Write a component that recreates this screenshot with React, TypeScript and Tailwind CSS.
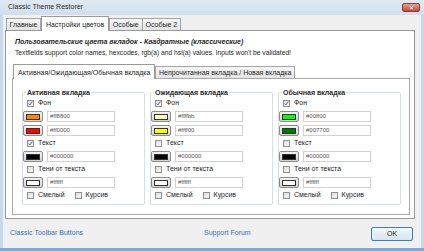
import React from 'react';

interface SwatchProps {
    color: string,
    value: string
}

interface GroupProps {
    title: string,
    bgChecked: boolean,
    textChecked: boolean,
    swatches: SwatchProps[]
}

const groups: GroupProps[] = [
    {
        title: "Активная вкладка",
        bgChecked: true,
        textChecked: true,
        swatches: [
            { color: "bg-[#ff8800]", value: "#ff8800" },
            { color: "bg-[#ff0000]", value: "#ff0000" },
        ]
    },
    {
        title: "Ожидающая вкладка",
        bgChecked: true,
        textChecked: false,
        swatches: [
            { color: "bg-[#ffffbb]", value: "#ffffbb" },
            { color: "bg-[#ffff00]", value: "#ffff00" },
        ]
    },
    {
        title: "Обычная вкладка",
        bgChecked: true,
        textChecked: false,
        swatches: [
            { color: "bg-[#00ff00]", value: "#00ff00" },
            { color: "bg-[#007700]", value: "#007700" },
        ]
    },
];

const Check = ({ checked, label }: { checked?: boolean, label: string }) => (
    <div className="flex items-center gap-[4px] h-[9px]">
        <span className="w-[7px] h-[7px] border border-[#8f8f8f] bg-linear-to-br from-[#dedede] to-[#fbfbfb] flex items-center justify-center shrink-0">
            {checked && (
                <svg width="5" height="5" viewBox="0 0 5 5">
                    <path d="M0.6 2.6 L1.9 3.9 L4.4 0.7" stroke="#4c5f8e" strokeWidth="1" fill="none" />
                </svg>
            )}
        </span>
        <span>{label}</span>
    </div>
);

const Swatch = ({ color, value }: SwatchProps) => (
    <div className="flex items-center gap-[4px] h-[11px]">
        <span className="w-[20px] h-[11px] border border-[#8c8c8c] rounded-[2px] bg-linear-to-b from-[#f4f4f4] to-[#d3d3d3] flex items-center justify-center shrink-0">
            <span className={"w-[14px] h-[6px] border border-[#333] " + color} />
        </span>
        <span className="w-[68px] h-[11px] border border-[#d2d2d2] bg-white text-[6px] leading-[9px] text-[#555] pl-[2px]">{value}</span>
    </div>
);

const Group = ({ title, bgChecked, textChecked, swatches }: GroupProps) => (
    <fieldset className="w-[123px] border border-[#d5dfe5] rounded-[2px] pb-[4px]">
        <legend className="ml-[3px] px-[1px] font-bold leading-[9px] text-[#2a2a2a]">{title}</legend>
        <div className="flex flex-col gap-[3px] pt-[2px]">
            <div className="pl-[4px]"><Check checked={bgChecked} label="Фон" /></div>
            {swatches.map((s) => <Swatch key={s.value} {...s} />)}
            <div className="pl-[4px]"><Check checked={textChecked} label="Текст" /></div>
            <Swatch color="bg-[#000000]" value="#000000" />
            <div className="pl-[4px]"><Check label="Тени от текста" /></div>
            <Swatch color="bg-[#ffffff]" value="#ffffff" />
            <div className="pl-[4px] flex gap-[10px]">
                <Check label="Смелый" />
                <Check label="Курсив" />
            </div>
        </div>
    </fieldset>
);

const Tab = ({ label, active }: { label: string, active?: boolean }) => (
    active ? (
        <div className="h-[15px] px-[4px] border border-b-0 border-[#9a9a9a] bg-white flex items-center leading-none">{label}</div>
    ) : (
        <div className="h-[12px] mb-[1px] px-[3px] border border-b-0 border-[#a5a5a5] bg-linear-to-b from-[#f6f6f6] to-[#e4e4e4] flex items-center leading-none -mx-[0.5px]">{label}</div>
    )
);

export default function App() {
    return (
        <div className="w-[424px] h-[251px] bg-[#c6d8eb] flex flex-col overflow-hidden font-['Liberation_Sans',Arial,sans-serif] text-[7px] text-[#1e1e1e]">
            <div className="h-[15px] shrink-0 flex items-center pl-[8px] pr-[4px] bg-linear-to-b from-[#e0eaf4] to-[#d0deed]">
                <span className="text-[#2a2a2a]">Classic Theme Restorer</span>
                <span className="ml-auto w-[18px] h-[9px] rounded-[2px] border border-[#8f3c33] bg-linear-to-b from-[#e9a091] to-[#c2473a] flex items-center justify-center text-white text-[6px] leading-none">✕</span>
            </div>

            <div className="flex-1 mx-[3px] bg-[#f0f0f0] flex flex-col pt-[1px] pl-[2px] pr-[6px]">
                <div className="h-[15px] flex items-end pl-[1px] relative z-10">
                    <Tab label="Главные" />
                    <Tab label="Настройки цветов" active />
                    <Tab label="Особые" />
                    <Tab label="Особые 2" />
                </div>
                <div className="-mt-[1px] border border-[#9a9a9a] bg-white pt-[5px] pl-[6px] pr-[4px] pb-[3px]">
                    <div className="pl-[3px] leading-[11px]">
                        <div className="font-bold italic">Пользовательские цвета вкладок - Квадратные (классические)</div>
                        <div className="text-[6.7px]">Textfields support color names, hexcodes, rgb(a) and hsl(a) values. Inputs won't be validated!</div>
                    </div>
                    <div className="mt-[6px] h-[15px] flex items-end pl-[1px] relative z-10">
                        <Tab label="Активная/Ожидающая/Обычная вкладка" active />
                        <Tab label="Непрочитанная вкладка / Новая вкладка" />
                    </div>
                    <div className="-mt-[1px] border border-[#a9a9a9] bg-white pt-[9px] pb-[9px] pl-[9px] flex gap-[5px]">
                        {groups.map((g) => <Group key={g.title} {...g} />)}
                    </div>
                </div>
                <div className="flex-1 flex items-center pl-[5px]">
                    <span className="w-[194px] text-[#3b6fae]">Classic Toolbar Buttons</span>
                    <span className="text-[#3b6fae]">Support Forum</span>
                    <span className="ml-auto mr-[2px] w-[42px] h-[14px] rounded-[2px] border border-[#3c7fb1] bg-linear-to-b from-[#f2f7fb] to-[#d6e3ee] flex items-center justify-center leading-none">OK</span>
                </div>
            </div>
            <div className="h-[3px] shrink-0 bg-[#7fa9d2]" />
        </div>
    );
}
